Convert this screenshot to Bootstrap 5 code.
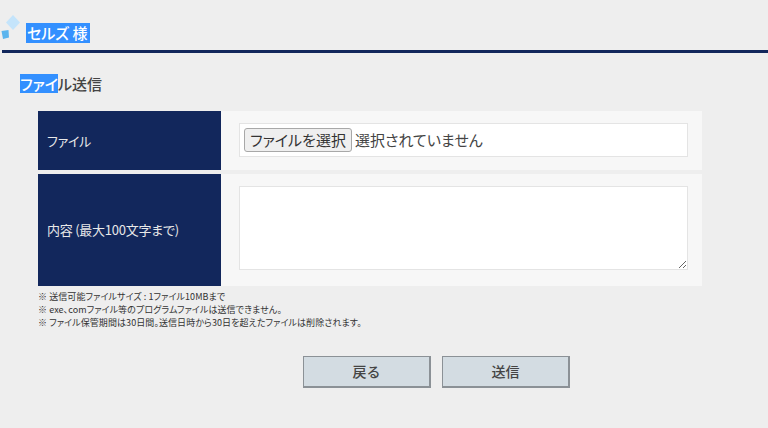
<!DOCTYPE html>
<html lang="ja">
<head>
<meta charset="utf-8">
<title>ファイル送信</title>
<link href="https://cdn.jsdelivr.net/npm/bootstrap@5.3.0/dist/css/bootstrap.min.css" rel="stylesheet">
<style>
html,body{height:100%;}
body{background:#eeeeee;color:#444;font-family:"Noto Sans CJK JP","Liberation Sans",sans-serif;font-feature-settings:"palt";overflow:hidden;}
.sel{background:#3390ff;color:#fff;}
.top-bar{height:53px;margin-left:2px;border-bottom:3px solid #12275c;padding-left:24px;padding-top:23px;}
.deco{margin-left:-26px;margin-top:-9px;margin-right:2px;flex:none;}
.who{font-size:15px;line-height:20px;height:20px;font-weight:500;padding:0 1px;width:64px;}
.page-title{font-size:15px;line-height:19px;font-weight:500;margin:21px 0 0 20px;height:20px;color:#444;}
.form-box{width:664px;margin:17px 0 0 38px;gap:4px;}
.frow{background:#f7f7f7;}
.frow-a{height:59px;}
.frow-b{height:112px;}
.flabel{width:183px;flex:none;background:#12275c;color:#e8e8e8;font-size:13px;padding-left:9px;letter-spacing:-.25px;}
.fval{padding:12px 14px 0 18px;}
.filebox{height:34px;background:#fff;border:1px solid #e4e4e4;font-size:15px;padding-left:4px;color:#444;}
.filebtn{width:108px;height:24px;padding:0;background:#efefef;border:1px solid #a8a8a8;border-radius:3px;font-size:15px;line-height:20px;color:#333;margin-right:3px;font-feature-settings:"palt";}
.ftext{height:84px;background:#fff;border:1px solid #e4e4e4;resize:vertical;display:block;}
.notes{font-size:9px;line-height:13px;margin:4px 0 0 38px;color:#333;height:39px;letter-spacing:.08px;}
.actions{margin-top:27px;padding-left:303px;gap:11px;}
.act{width:128px;height:32px;padding:0;background:#d3dce2;border:1px solid #8b9196;border-radius:0;border-bottom-width:2px;border-right-width:2px;font-size:14px;color:#444;font-weight:500;}
.act:hover{background:#d3dce2;color:#444;border-color:#8b9196;}
</style>
</head>
<body>
<div class="top-bar d-flex align-items-start">
  <svg class="deco" width="24" height="32" viewBox="0 0 24 32" aria-hidden="true">
    <path d="M13 1 L20 8.5 L13 16 L6 8.5 Z" fill="#c4e4fb"/>
    <path d="M1.5 17 L8.5 16 L9 23.5 L3 25 Z" fill="#5cb5ee"/>
  </svg>
  <span class="who sel">セルズ 様</span>
</div>
<h1 class="page-title"><span class="sel d-inline-block">ファイ</span>ル送信</h1>
<form class="form-box d-flex flex-column">
  <div class="frow frow-a d-flex">
    <div class="flabel d-flex align-items-center">ファイル</div>
    <div class="fval flex-grow-1">
      <div class="filebox d-flex align-items-center">
        <button type="button" class="filebtn">ファイルを選択</button><span>選択されていません</span>
      </div>
    </div>
  </div>
  <div class="frow frow-b d-flex">
    <div class="flabel d-flex align-items-center">内容 (最大100文字まで)</div>
    <div class="fval flex-grow-1">
      <textarea class="ftext w-100" aria-label="内容"></textarea>
    </div>
  </div>
</form>
<div class="notes">
  <div>※ 送信可能ファイルサイズ : 1ファイル10MBまで</div>
  <div>※ exe、comファイル等のプログラムファイルは送信できません。</div>
  <div>※ ファイル保管期間は30日間。送信日時から30日を超えたファイルは削除されます。</div>
</div>
<div class="actions d-flex">
  <button type="button" class="btn act">戻る</button>
  <button type="button" class="btn act">送信</button>
</div>
<script src="https://cdn.jsdelivr.net/npm/bootstrap@5.3.0/dist/js/bootstrap.bundle.min.js"></script>
</body>
</html>
